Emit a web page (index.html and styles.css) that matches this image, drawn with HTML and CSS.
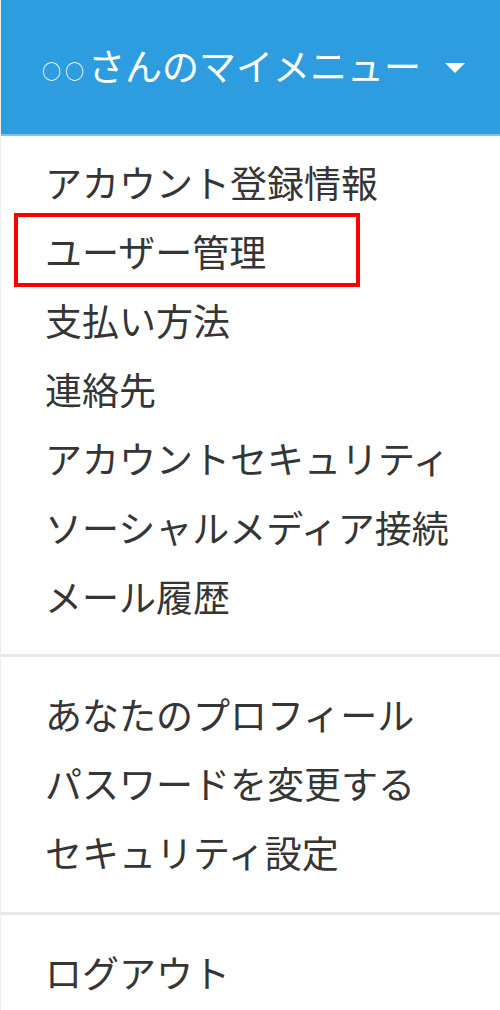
FILE: index.html
```html
<!DOCTYPE html>
<html lang="ja">
<head>
  <meta charset="utf-8">
  <title>マイメニュー</title>
  <link rel="stylesheet" href="styles.css">
</head>
<body>
  <div class="menu">
    <div class="menu-header">
      <span class="menu-title"><span class="marks">○○</span>さんのマイメニュー</span>
      <span class="caret"></span>
    </div>
    <ul class="menu-group first">
      <li>アカウント登録情報</li>
      <li class="marked">ユーザー管理<span class="highlight"></span></li>
      <li>支払い方法</li>
      <li>連絡先</li>
      <li>アカウントセキュリティ</li>
      <li>ソーシャルメディア接続</li>
      <li>メール履歴</li>
    </ul>
    <ul class="menu-group">
      <li>あなたのプロフィール</li>
      <li>パスワードを変更する</li>
      <li>セキュリティ設定</li>
    </ul>
    <ul class="menu-group">
      <li>ログアウト</li>
    </ul>
  </div>
</body>
</html>
```

FILE: styles.css
```css
body {
  margin: 0;
  background-color: #fff;
  font-family: "Noto Sans CJK JP", "Noto Sans", sans-serif;
}
.menu {
  width: 500px;
  height: 1010px;
  overflow: hidden;
  border-left: 1px solid #eee;
  box-sizing: border-box;
}
.menu-header {
  height: 134px;
  background-color: #2e9de0;
  border-bottom: 2px solid #7cc3ee;
  display: flex;
  align-items: center;
  padding-left: 41px;
  padding-right: 35px;
  color: #fff;
}
.menu-title {
  font-size: 37px;
  line-height: 1;
  flex: 1;
  margin-bottom: 4px;
}
.marks {
  font-size: 19px;
  letter-spacing: 4px;
  vertical-align: 2px;
}
.caret {
  width: 0;
  height: 0;
  border-left: 10px solid transparent;
  border-right: 10px solid transparent;
  border-top: 10px solid #fff;
  margin-top: 2px;
}
.menu-group {
  list-style: none;
  margin: 0;
  padding: 24px 0;
  border-top: 3px solid #e8e8e8;
}
.menu-group.first {
  border-top: none;
  padding-top: 13px;
  padding-bottom: 22px;
}
.menu-group li {
  position: relative;
  height: 69px;
  line-height: 66px;
  padding-left: 44px;
  font-size: 37px;
  color: #353535;
}
.highlight {
  position: absolute;
  left: 13px;
  top: -5px;
  width: 338px;
  height: 66px;
  border: 4px solid #f00;
}
```
